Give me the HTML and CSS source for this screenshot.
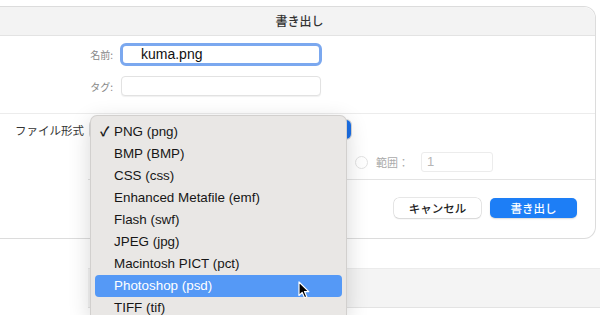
FILE: index.html
```html
<!DOCTYPE html>
<html lang="ja">
<head>
    <meta charset="UTF-8">
    <title>書き出し</title>
    <link rel="stylesheet" href="styles.css">
</head>
<body>
    <div class="window">
        <div class="titlebar">書き出し</div>

        <div class="form">
            <div class="form-row">
                <label class="form-label">名前:</label>
                <div class="text-field focused">kuma.png</div>
            </div>
            <div class="form-row">
                <label class="form-label">タグ:</label>
                <div class="text-field tags"></div>
            </div>
        </div>

        <div class="format">
            <div class="format-row">
                <span class="format-label">ファイル形式</span>
                <div class="select"><span class="select-arrow"></span></div>
            </div>
            <div class="range-row">
                <span class="radio"></span>
                <span class="range-label">範囲：</span>
                <div class="range-field">1</div>
            </div>
        </div>

        <div class="actions">
            <button class="button">キャンセル</button>
            <button class="button primary">書き出し</button>
        </div>
    </div>

    <div class="band"></div>

    <!-- popup menu of the format select -->
    <ul class="menu">
        <li class="menu-item checked">PNG (png)</li>
        <li class="menu-item">BMP (BMP)</li>
        <li class="menu-item">CSS (css)</li>
        <li class="menu-item">Enhanced Metafile (emf)</li>
        <li class="menu-item">Flash (swf)</li>
        <li class="menu-item">JPEG (jpg)</li>
        <li class="menu-item">Macintosh PICT (pct)</li>
        <li class="menu-item selected">Photoshop (psd)</li>
        <li class="menu-item">TIFF (tif)</li>
    </ul>

    <svg class="cursor" width="12" height="18" viewBox="0 0 12 18">
        <path d="M1 1 L1 14.5 L4.2 11.4 L6.6 16.8 L8.8 15.8 L6.5 10.6 L10.8 10.6 Z" fill="#000" stroke="#fff" stroke-width="1.2" stroke-linejoin="round"/>
    </svg>
</body>
</html>
```

FILE: styles.css
```css
body {
    font-family: 'Liberation Sans', 'Noto Sans CJK JP', sans-serif;
    background-color: #fff;
    color: #222;
    margin: 0;
    width: 600px;
    height: 315px;
    overflow: hidden;
    position: relative;
}
.window {
    margin: 6px 4px 0 0;
    border: 1px solid #dcdcdc;
    border-left: none;
    border-radius: 0 12px 12px 0;
    background-color: #fff;
}
.titlebar {
    height: 28px;
    line-height: 28px;
    background-color: #f3f3f3;
    border-bottom: 1px solid #e3e3e3;
    border-radius: 0 12px 0 0;
    text-align: center;
    font-family: 'Noto Sans CJK JP', sans-serif;
    font-size: 12px;
    font-weight: 500;
    color: #333;
    padding-left: 4px;
}
.form {
    padding: 7px 0 17px;
    border-bottom: 1px solid #ececec;
}
.form-row {
    display: flex;
    align-items: center;
    margin-bottom: 10px;
}
.form-row:last-child {
    margin-bottom: 0;
}
.form-label {
    width: 113px;
    text-align: right;
    font-family: 'Noto Sans CJK JP', sans-serif;
    font-size: 10px;
    color: #888;
    margin-right: 7px;
}
.text-field {
    width: 200px;
    height: 20px;
    border: 1px solid #e2e2e2;
    border-radius: 4px;
    box-sizing: border-box;
    background-color: #fff;
    font-size: 14px;
    line-height: 17px;
    padding-left: 18px;
}
.text-field.focused {
    width: 202px;
    height: 23px;
    border: 3px solid #7ba8ef;
    border-radius: 6px;
    line-height: 17px;
    color: #111;
}
.text-field.tags {
    margin-left: 1px;
    box-shadow: 0 1px 1px rgba(0, 0, 0, 0.06);
}
.format {
    height: 65px;
}
.format-row {
    display: flex;
    align-items: center;
    padding: 6px 0 0 15px;
}
.format-label {
    font-family: 'Noto Sans CJK JP', sans-serif;
    font-size: 11.5px;
    color: #333;
    width: 75px;
}
.select {
    width: 261px;
    height: 19px;
    border-radius: 5px;
    background-color: #fff;
    box-shadow: 0 0 0 1px #d6d6d6;
    display: flex;
    justify-content: flex-end;
}
.select-arrow {
    width: 16px;
    border-radius: 0 5px 5px 0;
    background-color: #1b6fe6;
}
.range-row {
    display: flex;
    align-items: center;
    padding: 13px 0 0 355px;
}
.radio {
    width: 11px;
    height: 11px;
    border: 1px solid #e2e2e2;
    border-radius: 50%;
    margin-right: 8px;
}
.range-label {
    font-family: 'Noto Sans CJK JP', sans-serif;
    font-size: 11px;
    color: #aaa;
    width: 45px;
}
.range-field {
    width: 72px;
    height: 20px;
    box-sizing: border-box;
    border: 1px solid #ececec;
    border-radius: 3px;
    font-size: 13px;
    line-height: 18px;
    color: #b5b5b5;
    padding-left: 5px;
}
.actions {
    margin-left: 88px;
    border-top: 1px solid #e3e3e3;
    display: flex;
    justify-content: flex-end;
    gap: 9px;
    padding: 18px 18px 20px;
}
.button {
    width: 87px;
    height: 20px;
    border: none;
    border-radius: 5px;
    background-color: #fff;
    box-shadow: 0 0 0 0.5px #cfcfcf, 0 1px 1.5px rgba(0, 0, 0, 0.12);
    font-family: 'Noto Sans CJK JP', sans-serif;
    font-size: 11.5px;
    font-weight: 500;
    color: #222;
    padding: 0;
}
.button.primary {
    background-color: #1d7ef6;
    color: #fff;
    box-shadow: 0 1px 1.5px rgba(0, 0, 0, 0.15);
}
.band {
    margin: 29px 0 0 88px;
    height: 38px;
    background-color: #f4f4f4;
    border-top: 1px solid #ebebeb;
    border-bottom: 1px solid #e3e3e3;
}
.menu {
    position: absolute;
    left: 90px;
    top: 115px;
    width: 257px;
    height: 200px;
    box-sizing: border-box;
    margin: 0;
    padding: 5px 0 0;
    list-style: none;
    overflow: hidden;
    background-color: #e9e7e5;
    border: 1px solid #d2d0ce;
    border-bottom: none;
    border-radius: 7px 7px 0 0;
    box-shadow: 0 6px 22px rgba(0, 0, 0, 0.16);
}
.menu-item {
    height: 22px;
    line-height: 22px;
    margin: 0 4px;
    padding-left: 19px;
    border-radius: 4px;
    font-size: 13.4px;
    color: #161616;
    position: relative;
}
.menu-item.checked::before {
    content: '\2713';
    position: absolute;
    left: 5px;
    font-size: 13px;
    font-weight: bold;
}
.menu-item.selected {
    background-color: #5599f6;
    color: #fff;
}
.cursor {
    position: absolute;
    left: 298px;
    top: 281px;
}
```
